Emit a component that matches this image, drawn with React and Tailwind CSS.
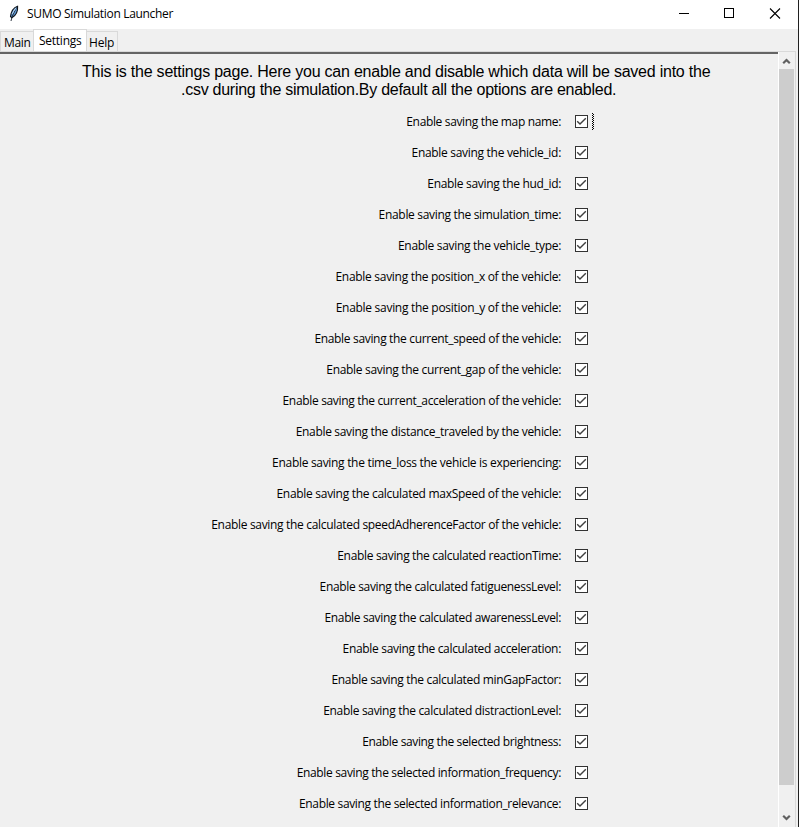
// Each entry holds the option's text and its label's width adjustment in pixels.
const options = [
  ["map name:", 4],
  ["vehicle_id:", 3],
  ["hud_id:", 3],
  ["simulation_time:", 4],
  ["vehicle_type:", 3],
  ["position_x of the vehicle:", 4],
  ["position_y of the vehicle:", 4],
  ["current_speed of the vehicle:", 6],
  ["current_gap of the vehicle:", 5],
  ["current_acceleration of the vehicle:", 7],
  ["distance_traveled by the vehicle:", 6],
  ["time_loss the vehicle is experiencing:", 6],
  ["calculated maxSpeed of the vehicle:", 5],
  ["calculated speedAdherenceFactor of the vehicle:", 8],
  ["calculated reactionTime:", 5],
  ["calculated fatiguenessLevel:", 6],
  ["calculated awarenessLevel:", 7],
  ["calculated acceleration:", 5],
  ["calculated minGapFactor:", 5],
  ["calculated distractionLevel:", 5],
  ["selected brightness:", 6],
  ["selected information_frequency:", 7],
  ["selected information_relevance:", 7],
];

function Feather() {
  return (
    <svg width="12" height="17" viewBox="0 0 12 17" className="block shrink-0">
      <path d="M8.6 1.2 C5 2.5 2.2 6 1.5 11.5 L2.8 12.8 C6.8 10.5 9 6 8.6 1.2Z" fill="#5b94d0" stroke="#10151c" strokeWidth="1.1" />
      <path d="M7.5 3 C5 7 3 11 2 16" fill="none" stroke="#17202c" strokeWidth="0.9" />
      <path d="M7 3 C5 5 4 7 3.2 9" fill="none" stroke="#a9cdf0" strokeWidth="1.1" />
    </svg>
  );
}

function TitleBar() {
  return (
    <header className="flex h-[29px] shrink-0 items-center bg-white pl-[9px] pr-[17px]">
      <div className="pb-[3px]">
        <Feather />
      </div>
      <span className="ml-1.5 pb-[1px] text-[12px] leading-4 tracking-[-0.32px]">SUMO Simulation Launcher</span>
      <div className="ml-auto flex items-center gap-[35px] pb-[3px]">
        <svg width="11" height="11" className="-mr-px" shapeRendering="crispEdges">
          <path d="M0 5.5H10" stroke="#000" />
        </svg>
        <svg width="11" height="11" className="-mr-px" shapeRendering="crispEdges">
          <rect x="0.5" y="0.5" width="9" height="9" fill="none" stroke="#000" />
        </svg>
        <svg width="12" height="11">
          <path d="M1 0.5L11 10.5M11 0.5L1 10.5" stroke="#000" strokeWidth="1.1" />
        </svg>
      </div>
    </header>
  );
}

function Tabs() {
  return (
    <nav className="flex h-[22px] shrink-0 items-end text-[12px] leading-[22px]">
      <div className="h-5 w-[33px] border border-r-0 border-b-0 border-[#d9d9d9] pl-[3px] tracking-[-0.3px]">Main</div>
      <div className="h-[22px] w-[54px] border border-b-0 border-[#d9d9d9] bg-white pl-[5px] tracking-[-0.25px]">Settings</div>
      <div className="h-5 w-[31px] border border-b-0 border-l-0 border-[#d9d9d9] pl-[2px] tracking-[-0.2px]">Help</div>
    </nav>
  );
}

function Check() {
  return (
    <svg width="13" height="13" viewBox="0 0 13 13" className="ml-[14px] block shrink-0">
      <rect x="0.5" y="0.5" width="12" height="12" fill="#fff" stroke="#333" />
      <path d="M2.2 6.3L5 9.1L10.8 3.3" fill="none" stroke="#404040" strokeWidth="1.4" />
    </svg>
  );
}

function Focus() {
  return (
    <svg width="2" height="17" className="ml-1 block" shapeRendering="crispEdges">
      <path d="M0.5 0V17" stroke="#000" strokeDasharray="1 1" />
      <path d="M1.5 1V17" stroke="#000" strokeDasharray="1 1" />
    </svg>
  );
}

function ScrollBar() {
  return (
    <div className="flex w-[18px] shrink-0 flex-col border-r border-[#d9d9d9] border-l border-l-white">
      <svg width="15" height="17" className="block shrink-0">
        <path d="M4.2 11.3L7.5 8L10.8 11.3" fill="none" stroke="#606060" strokeWidth="2.2" />
      </svg>
      <div className="h-[716px] w-[15px] bg-[#cdcdcd]" />
      <svg width="15" height="17" className="mt-auto mb-[1px] block shrink-0">
        <path d="M4.2 6.7L7.5 10L10.8 6.7" fill="none" stroke="#606060" strokeWidth="2.2" />
      </svg>
    </div>
  );
}

export default function App() {
  return (
    <div className="flex h-[827px] w-[799px] overflow-hidden bg-[#f0f0f0] font-['Open_Sans',sans-serif] text-black">
      <div className="flex min-w-0 grow flex-col">
        <TitleBar />
        <Tabs />
        <div className="flex min-h-0 grow flex-col">
          <div className="h-px w-[796px] bg-[#d9d9d9]" />
          <div className="flex min-h-0 grow">
            <main className="w-[778px] shrink-0 border-t-2 border-[#646464] pt-[9px]">
              <div className="h-[43px] font-['Liberation_Sans',Arial,sans-serif] text-[16px] leading-[18px] whitespace-nowrap">
                <p className="pl-[82px] tracking-[-0.228px]">
                  This is the settings page. Here you can enable and disable which data will be saved into the
                </p>
                <p className="pl-[181px] tracking-[-0.265px]">
                  .csv during the simulation.By default all the options are enabled.
                </p>
              </div>
              {options.map(([name, excess], i) => (
                <div key={name} className="flex h-[31px] items-center text-[12px] leading-4">
                  <span
                    className="w-[561px] pt-px text-right whitespace-nowrap"
                    style={{ letterSpacing: `${-0.2 - excess / (name.length + 18)}px` }}
                  >
                    Enable saving the {name}
                  </span>
                  <Check />
                  {i === 0 && <Focus />}
                </div>
              ))}
            </main>
            <ScrollBar />
          </div>
        </div>
      </div>
      <div className="w-px shrink-0 bg-[#202020]" />
    </div>
  );
}
